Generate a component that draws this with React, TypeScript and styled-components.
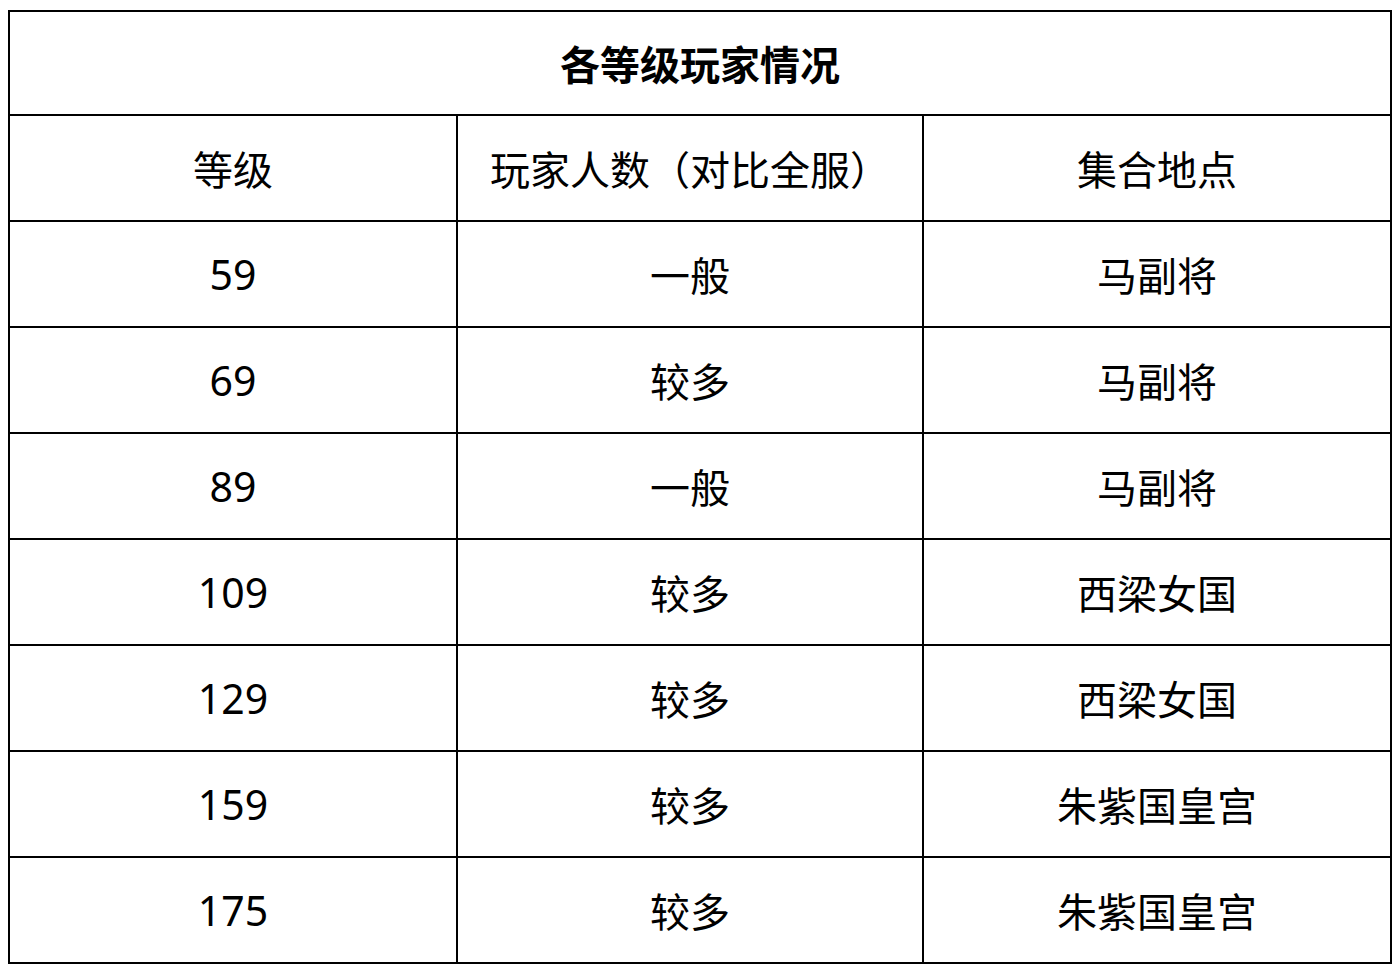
import * as React from 'react';
import styled, { createGlobalStyle } from 'styled-components';

const GlobalStyle = createGlobalStyle`
  html, body {
    margin: 0;
    padding: 0;
    background: #fff;
  }
`;

const Page = styled.div`
  padding: 10px 8px 0 8px;
  font-family: 'Noto Sans', 'Noto Sans CJK SC', sans-serif;
  color: #000;
`;

const Table = styled.table`
  width: 1382px;
  border-collapse: collapse;
  table-layout: fixed;
  border: 2px solid #000;
`;

const TitleCell = styled.th`
  height: 102px;
  border: 2px solid #000;
  font-size: 40px;
  font-weight: 700;
  text-align: center;
  vertical-align: middle;
  padding: 0;
  font-family: 'Noto Sans CJK SC', sans-serif;
`;

const Cell = styled.td<{ $num?: boolean }>`
  height: 104px;
  border: 2px solid #000;
  font-size: ${(p) => (p.$num ? '41px' : '40px')};
  font-weight: 400;
  text-align: center;
  vertical-align: middle;
  padding: 0;
`;

const rows = [
  ['59', '一般', '马副将'],
  ['69', '较多', '马副将'],
  ['89', '一般', '马副将'],
  ['109', '较多', '西梁女国'],
  ['129', '较多', '西梁女国'],
  ['159', '较多', '朱紫国皇宫'],
  ['175', '较多', '朱紫国皇宫'],
];

export default function App() {
  return (
    <>
      <GlobalStyle />
      <Page>
        <Table>
          <colgroup>
            <col style={{ width: 448 }} />
            <col style={{ width: 466 }} />
            <col style={{ width: 468 }} />
          </colgroup>
          <thead>
            <tr>
              <TitleCell colSpan={3}>各等级玩家情况</TitleCell>
            </tr>
          </thead>
          <tbody>
            <tr>
              <Cell>等级</Cell>
              <Cell>玩家人数（对比全服）</Cell>
              <Cell>集合地点</Cell>
            </tr>
            {rows.map((r, i) => (
              <tr key={i}>
                <Cell $num>{r[0]}</Cell>
                <Cell>{r[1]}</Cell>
                <Cell>{r[2]}</Cell>
              </tr>
            ))}
          </tbody>
        </Table>
      </Page>
    </>
  );
}
